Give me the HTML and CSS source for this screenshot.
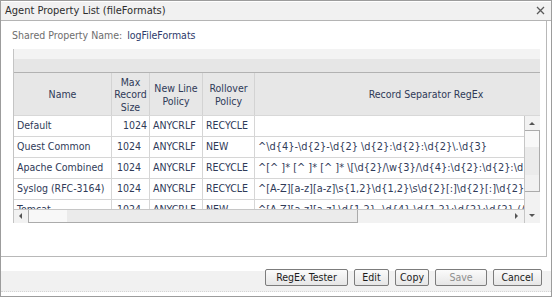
FILE: index.html
```html
<!DOCTYPE html>
<html lang="en">
<head>
  <meta charset="UTF-8">
  <title>Agent Property List (fileFormats)</title>
  <link rel="stylesheet" href="styles.css">
</head>
<body>
  <div class="dialog">
    <div class="titlebar">
      <span class="title">Agent Property List (fileFormats)</span>
      <svg class="close" width="9" height="9" viewBox="0 0 9 9">
        <path d="M1 1L8 8M8 1L1 8" stroke="#5a5a5a" stroke-width="1.3" fill="none"/>
      </svg>
    </div>

    <div class="panel">
      <div class="prop-line">
        <span class="prop-label">Shared Property Name:</span>
        <span class="prop-value">logFileFormats</span>
      </div>

      <!-- file formats grid -->
      <div class="grid">
        <div class="grid-toolbar"></div>
        <div class="grid-head">
          <div class="hcell">Name</div>
          <div class="hcell">Max<br>Record<br>Size</div>
          <div class="hcell">New Line<br>Policy</div>
          <div class="hcell">Rollover<br>Policy</div>
          <div class="hcell">Record Separator RegEx</div>
        </div>
        <div class="grid-body">
          <div class="grid-view">
            <div class="rows">
              <div class="row">
                <div class="cell">Default</div>
                <div class="cell num num-default">1024</div>
                <div class="cell">ANYCRLF</div>
                <div class="cell">RECYCLE</div>
                <div class="cell regex"></div>
              </div>
              <div class="row">
                <div class="cell">Quest Common</div>
                <div class="cell num">1024</div>
                <div class="cell">ANYCRLF</div>
                <div class="cell">NEW</div>
                <div class="cell regex">^\d{4}-\d{2}-\d{2} \d{2}:\d{2}:\d{2}\.\d{3}</div>
              </div>
              <div class="row">
                <div class="cell">Apache Combined</div>
                <div class="cell num">1024</div>
                <div class="cell">ANYCRLF</div>
                <div class="cell">RECYCLE</div>
                <div class="cell regex">^[^ ]* [^ ]* [^ ]* \[\d{2}/\w{3}/\d{4}:\d{2}:\d{2}:\d{2}</div>
              </div>
              <div class="row">
                <div class="cell">Syslog (RFC-3164)</div>
                <div class="cell num">1024</div>
                <div class="cell">ANYCRLF</div>
                <div class="cell">RECYCLE</div>
                <div class="cell regex">^[A-Z][a-z][a-z]\s{1,2}\d{1,2}\s\d{2}[:]\d{2}[:]\d{2}</div>
              </div>
              <div class="row">
                <div class="cell">Tomcat</div>
                <div class="cell num">1024</div>
                <div class="cell">ANYCRLF</div>
                <div class="cell">NEW</div>
                <div class="cell regex">^[A-Z][a-z][a-z] \d{1,2}, \d{4} \d{1,2}:\d{2}:\d{2} (AM|PM)</div>
              </div>
            </div>
            <div class="hscroll">
              <div class="arrow arrow-left"></div>
              <div class="hthumb"></div>
              <div class="hspace"></div>
              <div class="arrow arrow-right"></div>
            </div>
          </div>
          <div class="vscroll">
            <div class="arrow arrow-up"></div>
            <div class="vthumb"></div>
            <div class="vspace"></div>
            <div class="arrow arrow-down"></div>
          </div>
        </div>
      </div>
    </div>

    <div class="footer">
      <div class="button-bar">
        <button class="btn btn-tester">RegEx Tester</button>
        <button class="btn btn-edit">Edit</button>
        <button class="btn btn-copy">Copy</button>
        <button class="btn btn-save" disabled>Save</button>
        <button class="btn btn-cancel">Cancel</button>
      </div>
    </div>
  </div>
</body>
</html>
```

FILE: styles.css
```css
body {
  margin: 0;
  font-family: "DejaVu Sans Condensed", "Liberation Sans", Arial, sans-serif;
  font-size: 10.5px;
  background: #fff;
}
.dialog {
  width: 552px;
  height: 297px;
  box-sizing: border-box;
  border: 1px solid #9c9c9c;
  background: #fff;
}
.titlebar {
  height: 19px;
  line-height: 19px;
  font-size: 11px;
  background: #f1f1f1;
  border-bottom: 1px solid #b4b4b4;
  box-shadow: inset 0 1px #fff;
  padding-left: 4px;
  display: flex;
  align-items: center;
  justify-content: space-between;
  padding-right: 6px;
  color: #2d2d2d;
}
.close {
  display: block;
}
.panel {
  width: 545px;
  height: 235px;
  border-right: 1px solid #b8b8b8;
  border-bottom: 1px solid #b8b8b8;
}
.prop-line {
  padding: 8px 0 0 11px;
  line-height: 13px;
}
.prop-label {
  color: #6e6e6e;
}
.prop-value {
  color: #2d3a6b;
  margin-left: 2px;
}
.grid {
  margin: 7px 0 0 12px;
  width: 526px;
  border-left: 1px solid #c4c4c4;
  color: #2f3a58;
}
.grid-toolbar {
  height: 23px;
  background: linear-gradient(#f3f3f3 0, #f3f3f3 10px, #e6e6e6 10px);
  border-bottom: 1px solid #b2b2b2;
}
.grid-head {
  height: 42px;
  display: grid;
  grid-template-columns: 98px 38px 53px 52px 343px;
  background: #e7e7e7;
  border-bottom: 1px solid #d8d8d8;
  overflow: hidden;
}
.hcell {
  box-sizing: border-box;
  border-right: 1px solid #d3d3d3;
  display: flex;
  align-items: center;
  justify-content: center;
  text-align: center;
  line-height: 12.5px;
  padding-top: 1px;
}
.grid-body {
  display: flex;
  height: 107px;
}
.grid-view {
  width: 510px;
  display: flex;
  flex-direction: column;
}
.rows {
  height: 93px;
  overflow: hidden;
}
.row {
  display: grid;
  grid-template-columns: 98px 38px 53px 52px 343px;
  height: 21px;
  box-sizing: border-box;
  border-bottom: 1px solid #d6d6d6;
}
.cell {
  box-sizing: border-box;
  border-right: 1px solid #d6d6d6;
  padding: 0 3px;
  line-height: 19px;
  white-space: nowrap;
  overflow: hidden;
}
.regex {
  font-family: "DejaVu Sans", sans-serif;
  font-size: 9.8px;
}
.num {
  padding-left: 5px;
}
.num-default {
  padding-left: 11px;
}
.hscroll {
  height: 13px;
  border-top: 1px solid #c6c6c6;
  background: #f2f2f2;
  display: flex;
}
.hthumb {
  width: 330px;
  box-sizing: border-box;
  border: 1px solid #ababab;
  border-top: none;
  background: linear-gradient(90deg, #f8f8f8 0, #f8f8f8 38px, #ebebeb 38px);
}
.hspace {
  flex: 1;
}
.vscroll {
  width: 15px;
  border-left: 1px solid #c6c6c6;
  background: #f2f2f2;
  display: flex;
  flex-direction: column;
}
.vthumb {
  height: 62px;
  box-sizing: border-box;
  border: 1px solid #ababab;
  border-left: none;
  background: linear-gradient(#f8f8f8 0, #f8f8f8 16px, #ebebeb 16px, #ebebeb 44px, #f1f1f1 44px);
}
.vspace {
  flex: 1;
}
.arrow {
  position: relative;
  width: 14px;
  height: 14px;
  flex: none;
}
.arrow::after {
  content: "";
  position: absolute;
  width: 0;
  height: 0;
  border: 3px solid transparent;
}
.arrow-up::after {
  left: 4px;
  top: 3px;
  border-bottom-color: #555;
}
.arrow-down::after {
  left: 4px;
  top: 5px;
  border-top-color: #555;
}
.arrow-left::after {
  left: 2px;
  top: 3px;
  border-right-color: #555;
}
.arrow-right::after {
  left: 5px;
  top: 3px;
  border-left-color: #555;
}
.vscroll .arrow {
  width: 15px;
}
.footer {
  padding-top: 14px;
}
.button-bar {
  height: 20px;
  background: #f1f1f1;
  border-bottom: 1px dotted #d4d4d4;
  display: flex;
  justify-content: flex-end;
  align-items: flex-start;
  gap: 6px;
  padding-right: 9px;
}
.btn {
  margin-top: -2px;
  height: 17px;
  padding: 0;
  border: 1px solid #7c7c7c;
  border-radius: 2px;
  background: linear-gradient(#fbfbfb, #e6e6e6);
  font-family: "DejaVu Sans Condensed", "Liberation Sans", Arial, sans-serif;
  font-size: 10.5px;
  color: #1c1c1c;
  line-height: 15px;
}
.btn-tester { width: 83px; }
.btn-edit { width: 35px; }
.btn-copy { width: 34px; }
.btn-save { width: 52px; color: #8e8e8e; }
.btn-cancel { width: 49px; }
```
